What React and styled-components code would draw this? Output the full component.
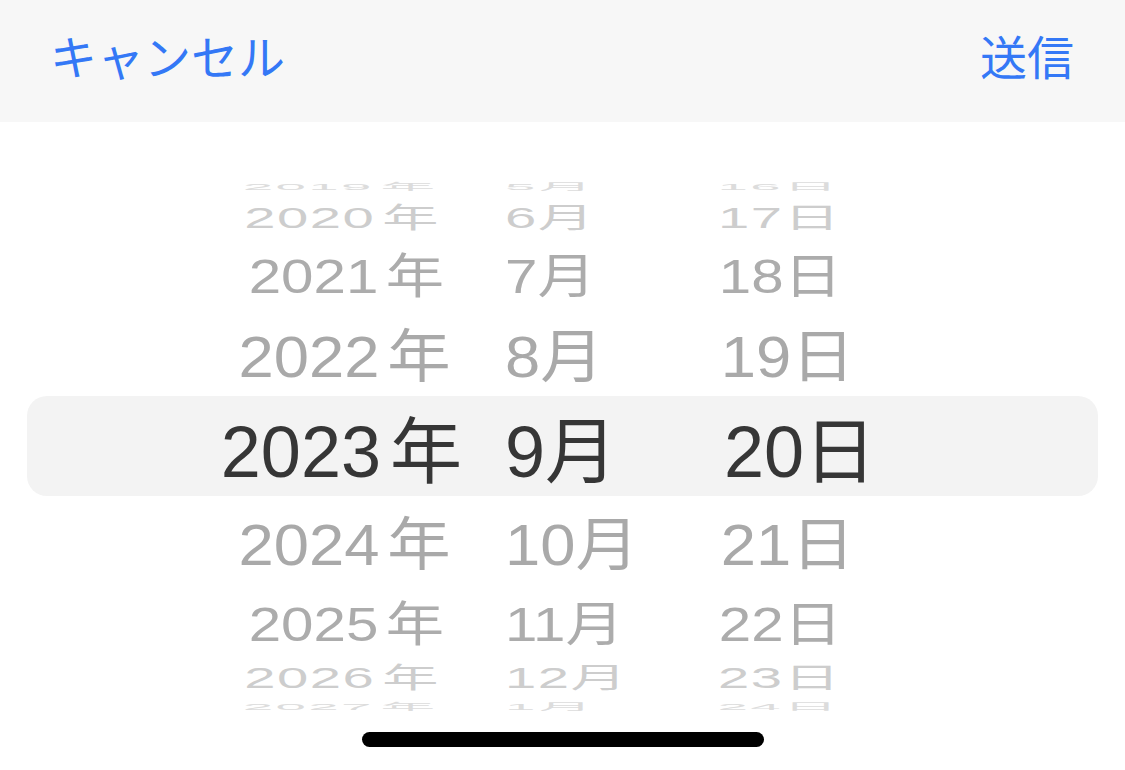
import React from 'react';
import styled, { createGlobalStyle } from 'styled-components';

const GlobalStyle = createGlobalStyle`
  html, body { margin: 0; padding: 0; background: #ffffff; }
  body { font-family: "Liberation Sans", "Noto Sans CJK JP", sans-serif; }
`;

const Screen = styled.div`
  width: 1125px;
  height: 770px;
  display: flex;
  flex-direction: column;
  overflow: hidden;
  background: #ffffff;
`;

const Toolbar = styled.header`
  height: 122px;
  flex: none;
  box-sizing: border-box;
  padding: 0 51px 14px 50px;
  background: #f7f7f7;
  display: flex;
  align-items: center;
  justify-content: space-between;
`;

const ToolbarButton = styled.button`
  border: 0;
  background: none;
  padding: 0;
  margin: 0;
  font-family: "Noto Sans CJK JP", sans-serif;
  font-size: 47px;
  font-weight: 400;
  line-height: 1;
  color: #3478f6;
  cursor: pointer;
`;

const Picker = styled.div`
  padding: 54px 27px 0;
  display: flex;
  flex-direction: column;
  flex: none;
`;

const Row = styled.div`
  display: grid;
  grid-template-columns: 435px 262px 1fr;
  grid-template-rows: ${(p) => p.$h}px;
  height: ${(p) => p.$h}px;
  flex: none;
  border-radius: 20px;
  background: ${(p) => (p.$selected ? '#f3f3f3' : 'transparent')};
`;

const Cell = styled.div`
  height: 100%;
  display: flex;
  align-items: center;
  justify-content: ${(p) => (p.$align === 'right' ? 'flex-end' : 'flex-start')};
  padding-left: ${(p) => p.$pad || 0}px;
`;

const Label = styled.span`
  display: inline-flex;
  align-items: baseline;
  flex: none;
  white-space: nowrap;
  font-size: 72px;
  line-height: 72px;
  height: 72px;
  color: ${(p) => p.$color};
  letter-spacing: ${(p) => p.$ls}px;
  transform: scale(${(p) => p.$sx}, ${(p) => p.$sy});
  transform-origin: ${(p) => p.$origin};
`;

const Unit = styled.span`
  font-family: "Noto Sans CJK JP", sans-serif;
  margin-left: ${(p) => p.$gap || 0}px;
`;

const HomeIndicator = styled.div`
  width: 402px;
  height: 15px;
  flex: none;
  border-radius: 8px;
  background: #000000;
  margin: 16px auto 0;
`;

const LEVELS = [
  { sx: 1, sy: 1, color: '#363636', ls: 0 },
  { sx: 0.88, sy: 0.8, color: '#a9a9a9', ls: 0 },
  { sx: 0.81, sy: 0.67, color: '#acacac', ls: 0 },
  { sx: 0.78, sy: 0.4, color: '#cdcdcd', ls: 2 },
  { sx: 0.76, sy: 0.13, color: '#dcdcdc', ls: 3 },
];

const HEIGHTS = [20, 40, 72, 88, 100, 88, 72, 40, 20];
const YEARS = [2019, 2020, 2021, 2022, 2023, 2024, 2025, 2026, 2027];
const MONTHS = [5, 6, 7, 8, 9, 10, 11, 12, 1];
const DAYS = [16, 17, 18, 19, 20, 21, 22, 23, 24];

function Entry({ value, unit, level, origin, gap }) {
  const l = LEVELS[level];
  return (
    <Label $color={l.color} $sx={l.sx} $sy={l.sy} $ls={l.ls} $origin={origin}>
      {value}
      <Unit $gap={gap}>{unit}</Unit>
    </Label>
  );
}

export default function App() {
  return (
    <>
      <GlobalStyle />
      <Screen>
        <Toolbar>
          <ToolbarButton>キャンセル</ToolbarButton>
          <ToolbarButton>送信</ToolbarButton>
        </Toolbar>
        <Picker>
          {HEIGHTS.map((h, i) => {
            const level = Math.abs(i - 4);
            return (
              <Row key={i} $h={h} $selected={i === 4}>
                <Cell $align="right">
                  <Entry value={YEARS[i]} unit="年" level={level} gap={9} origin="calc(50% + 25px) 50%" />
                </Cell>
                <Cell $pad={43}>
                  <Entry value={MONTHS[i]} unit="月" level={level} origin="0 50%" />
                </Cell>
                <Cell>
                  <Entry value={DAYS[i]} unit="日" level={level} origin="-27px 50%" />
                </Cell>
              </Row>
            );
          })}
        </Picker>
        <HomeIndicator />
      </Screen>
    </>
  );
}
